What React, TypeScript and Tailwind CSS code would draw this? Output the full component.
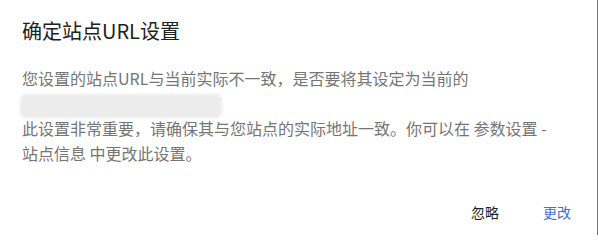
const cjk = "font-['Noto_Sans_CJK_SC','Noto_Sans',sans-serif]";

export default function App() {
  return (
    <div className={`w-[598px] h-[235px] bg-white border-r border-[#767676] flex flex-col ${cjk}`}>
      <h2 className="pl-[22px] pr-6 pt-[15px] text-[20px] leading-[32px] text-[#212121] font-normal">
        确定站点URL设置
      </h2>
      <div className="pl-[22px] pr-[36px] mt-[19px] text-[16px] leading-[25px] text-[#757575]">
        <p>您设置的站点URL与当前实际不一致，是否要将其设定为当前的</p>
        <div className="h-[25px] relative">
          <div className="absolute left-[-2px] top-[3px] w-[202px] h-[24px] rounded-[6px] bg-[#ececec] blur-[1.5px]" />
        </div>
        <p>此设置非常重要，请确保其与您站点的实际地址一致。你可以在 参数设置 - 站点信息 中更改此设置。</p>
      </div>
      <div className="mt-auto flex justify-end gap-2 p-2 pb-[5px]">
        <button className="min-w-16 h-9 px-2 text-[14px] text-[#212121]">忽略</button>
        <button className="min-w-16 h-9 px-2 text-[14px] text-[#3f6fd3]">更改</button>
      </div>
    </div>
  );
}
